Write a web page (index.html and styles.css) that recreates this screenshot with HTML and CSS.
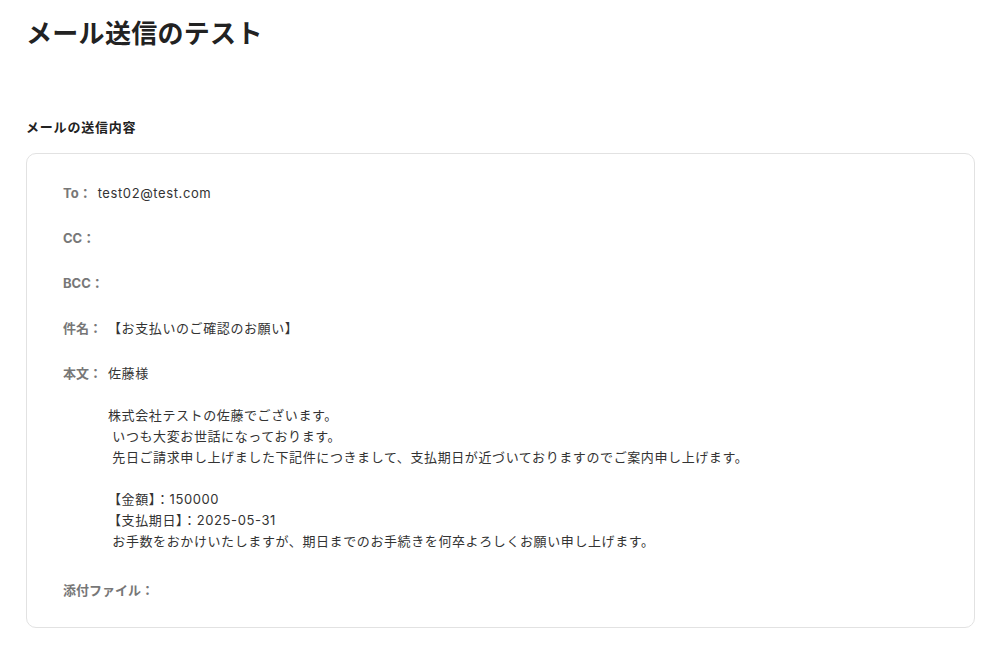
FILE: index.html
```html
<!DOCTYPE html>
<html lang="ja">
<head>
<meta charset="utf-8">
<link rel="stylesheet" href="styles.css">
</head>
<body>
<main class="page">
  <h1 class="title">メール送信のテスト</h1>
  <h2 class="section">メールの送信内容</h2>
  <div class="card">
    <div class="row"><span class="label">To：</span><span class="value">test02@test.com</span></div>
    <div class="row"><span class="label">CC：</span><span class="value"></span></div>
    <div class="row"><span class="label">BCC：</span><span class="value"></span></div>
    <div class="row"><span class="label">件名：</span><span class="value">【お支払いのご確認のお願い】</span></div>
    <div class="row body-row"><span class="label">本文：</span><div class="value body">佐藤様

株式会社テストの佐藤でございます。
 いつも大変お世話になっております。
 先日ご請求申し上げました下記件につきまして、支払期日が近づいておりますのでご案内申し上げます。

【金額】：150000
【支払期日】：2025-05-31
 お手数をおかけいたしますが、期日までのお手続きを何卒よろしくお願い申し上げます。</div></div>
    <div class="row"><span class="label">添付ファイル：</span><span class="value"></span></div>
  </div>
</main>
</body>
</html>
```
FILE: styles.css
```css
html, body {
  margin: 0;
  padding: 0;
  background: #ffffff;
}
body {
  font-family: Inter, "Noto Sans CJK JP", sans-serif;
  color: #333333;
}
.page {
  padding: 16px 30px 20px 26px;
}
.title {
  margin: 0;
  font-size: 26px;
  line-height: 36px;
  font-weight: 700;
  letter-spacing: 0.3px;
  color: #222222;
}
.section {
  margin: 65px 0 0 0;
  font-size: 13px;
  line-height: 20px;
  font-weight: 700;
  letter-spacing: 0.8px;
  color: #222222;
}
.card {
  margin-top: 16px;
  border: 1px solid #e2e2e2;
  border-radius: 10px;
  padding: 29px 36px 26px 36px;
  display: flex;
  flex-direction: column;
  gap: 24px;
}
.row {
  display: flex;
  align-items: flex-start;
  gap: 6px;
  font-size: 13px;
  line-height: 21px;
  min-height: 21px;
}
.label {
  font-weight: 700;
  color: #777777;
  white-space: nowrap;
}
.value {
  color: #333333;
  letter-spacing: 0.6px;
}
.body {
  white-space: pre-wrap;
  font-feature-settings: "chws" 1;
}
.body-row {
  margin-bottom: 4px;
}
```
